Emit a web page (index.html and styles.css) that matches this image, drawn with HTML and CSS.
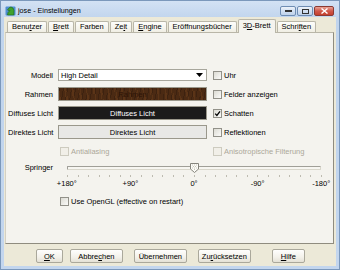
FILE: index.html
```html
<!DOCTYPE html>
<html lang="de">
<head>
  <meta charset="UTF-8" />
  <title>jose - Einstellungen</title>
  <link rel="stylesheet" href="styles.css">
</head>
<body>
  <div class="window">
    <div class="titlebar">
      <svg class="app-icon" width="11" height="10" viewBox="0 0 11 10">
        <rect x="0.5" y="0.5" width="10" height="9" rx="1" fill="#4f8fd0"/>
        <path d="M2.5 9 L3 6.5 L5 4.5 L3.5 4.8 L2.5 3.8 L4.5 1.5 L6 1 L8 2 L9 4.5 L8.8 9 Z" fill="#3fa22c" stroke="#1d6414" stroke-width="0.6"/>
      </svg>
      <span class="title">jose - Einstellungen</span>
      <div class="caption-buttons">
        <span class="cap min"><svg width="7" height="3"><rect x="0" y="0" width="7" height="2" fill="#333" /></svg></span>
        <span class="cap max"><svg width="7" height="5"><rect x="0.5" y="0.5" width="6" height="4" fill="none" stroke="#333"/></svg></span>
        <span class="cap close"><svg width="7" height="6"><path d="M0.5 0.5 L6.5 5.5 M6.5 0.5 L0.5 5.5" stroke="#fff" stroke-width="1.4"/></svg></span>
      </div>
    </div>

    <div class="client">
      <div class="tabs">
        <span class="tab">Benu<u>t</u>zer</span>
        <span class="tab"><u>B</u>rett</span>
        <span class="tab">Farben</span>
        <span class="tab">Ze<u>i</u>t</span>
        <span class="tab"><u>E</u>ngine</span>
        <span class="tab">Eröffnungsbücher</span>
        <span class="tab active">3<u>D</u>-Brett</span>
        <span class="tab">Schri<u>f</u>ten</span>
      </div>

      <div class="panel">
        <div class="form">
          <span class="label">Modell</span>
          <div class="select">
            <span>High Detail</span>
            <svg width="7" height="4"><path d="M0 0 L7 0 L3.5 4 Z" fill="#000"/></svg>
          </div>
          <label class="check"><span class="box"></span>Uhr</label>

          <span class="label">Rahmen</span>
          <div class="color-btn wood">Rahmen</div>
          <label class="check"><span class="box"></span>Felder anzeigen</label>

          <span class="label">Diffuses Licht</span>
          <div class="color-btn dark">Diffuses Licht</div>
          <label class="check"><span class="box"><svg width="7" height="7"><path d="M1.2 3.6 L2.9 5.4 L6 1.4" fill="none" stroke="#000" stroke-width="1.3"/></svg></span>Schatten</label>

          <span class="label">Direktes Licht</span>
          <div class="color-btn light">Direktes Licht</div>
          <label class="check"><span class="box"></span>Reflektionen</label>

          <span></span>
          <label class="check off indent"><span class="box"></span>Antialiasing</label>
          <label class="check off"><span class="box"></span>Anisotropische Filterung</label>
        </div>

        <div class="slider-row">
          <span class="label">Springer</span>
          <div class="slider">
            <div class="rail">
              <div class="track"></div>
              <svg class="thumb" width="9" height="10" viewBox="0 0 9 10">
                <path d="M0.5 0.5 H8.5 V6 L4.5 9.5 L0.5 6 Z" fill="#fbfbf7" stroke="#85847c"/>
                <path d="M2 2 h1 M4 2 h1 M6 2 h1 M3 3.5 h1 M5 3.5 h1 M2 5 h1 M4 5 h1 M6 5 h1 M4 6.5 h1" stroke="#c9c7bb" stroke-width="1"/>
              </svg>
            </div>
            <div class="ticks"></div>
            <div class="scale">
              <span>+180°</span>
              <span>+90°</span>
              <span>0°</span>
              <span>-90°</span>
              <span>-180°</span>
            </div>
          </div>
        </div>

        <label class="check opengl"><span class="box"></span>Use OpenGL (effective on restart)</label>
      </div>

      <div class="buttons">
        <button class="btn"><u>O</u>K</button>
        <button class="btn wide">Abbre<u>c</u>hen</button>
        <button class="btn wide sep">Übernehmen</button>
        <button class="btn wide sep">Zu<u>r</u>ücksetzen</button>
        <button class="btn help"><u>H</u>ilfe</button>
      </div>
    </div>
  </div>
</body>
</html>
```

FILE: styles.css
```css
body {
  margin: 0;
  font-family: "Liberation Sans", Arial, sans-serif;
  font-size: 7.5px;
  color: #000;
}
u {
  text-underline-offset: 1px;
}
.window {
  width: 340px;
  height: 270px;
  box-sizing: border-box;
  display: flex;
  flex-direction: column;
  padding: 0 3px 3px;
  border: 1px solid #7b98bb;
  background: linear-gradient(#d3e2f4, #c0d4ed 18px, #c3d6ee);
}
.titlebar {
  height: 16px;
  box-sizing: border-box;
  display: flex;
  align-items: flex-end;
  padding: 0 2px 1px 1px;
}
.app-icon {
  margin-right: 2px;
}
.title {
  flex: 1;
  line-height: 10px;
  font-size: 7.2px;
}
.caption-buttons {
  display: flex;
  gap: 1px;
}
.cap {
  height: 10px;
  box-sizing: border-box;
  display: flex;
  align-items: center;
  justify-content: center;
  border: 1px solid #6f8db3;
  border-radius: 2px;
  background: linear-gradient(#eef3fa, #d2e0f1 50%, #bfd2ea);
}
.cap.min, .cap.max {
  width: 16px;
}
.cap.close {
  width: 20px;
  border-color: #8a3a33;
  background: linear-gradient(#e9a395, #d0584a 50%, #c4402f);
}
.client {
  flex: 1;
  display: flex;
  flex-direction: column;
  background: #ece9d8;
}
.tabs {
  height: 15px;
  display: flex;
  align-items: flex-end;
  gap: 1px;
  padding-left: 3px;
}
.tab {
  height: 11px;
  box-sizing: border-box;
  padding: 0 4px;
  line-height: 10px;
  border: 1px solid #b9b6a8;
  border-bottom: none;
  border-radius: 2px 2px 0 0;
  background: linear-gradient(#fdfdfb, #f0eee4);
}
.tab.active {
  position: relative;
  z-index: 1;
  height: 14px;
  margin-bottom: -1px;
  line-height: 11px;
  background: #f4f3ee;
}
.panel {
  height: 212px;
  box-sizing: border-box;
  margin: 0 2px 0 1px;
  padding: 35px 0 0 2px;
  border: 1px solid;
  border-color: #b9b6a8 #8f8c7f #8f8c7f #d3d0c4;
  background: #f4f3ee;
}
.form {
  display: grid;
  grid-template-columns: 45px 149px auto;
  grid-auto-rows: 14px;
  column-gap: 5px;
  row-gap: 5px;
  align-items: center;
}
.label {
  text-align: right;
  white-space: nowrap;
}
.select {
  height: 12px;
  box-sizing: border-box;
  display: flex;
  align-items: center;
  justify-content: space-between;
  padding: 0 3px 0 2px;
  border: 1px solid #a7a69c;
  background: #fff;
}
.color-btn {
  height: 14px;
  box-sizing: border-box;
  display: flex;
  align-items: center;
  justify-content: center;
  border: 1px solid #9a988c;
}
.wood {
  color: #2e1507;
  background:
    repeating-linear-gradient(100deg, rgba(0,0,0,0.18) 0 1px, transparent 1px 4px),
    repeating-linear-gradient(80deg, rgba(120,70,30,0.35) 0 2px, transparent 2px 7px),
    #4b2a13;
}
.dark {
  color: #fff;
  background: #1b1b1b;
}
.light {
  background: #e8e8e6;
}
.check {
  display: flex;
  align-items: center;
  gap: 2px;
  margin-left: 1px;
  white-space: nowrap;
}
.box {
  width: 9px;
  height: 9px;
  box-sizing: border-box;
  display: flex;
  align-items: center;
  justify-content: center;
  border: 1px solid #929189;
  background: linear-gradient(135deg, #dcdbd3, #fbfbf9);
}
.check.indent {
  margin-left: 2px;
}
.check.off {
  color: #aca899;
}
.check.off .box {
  border-color: #cdcbbf;
  background: #f1efe8;
}
.slider-row {
  display: flex;
  margin-top: 5px;
}
.slider-row .label {
  width: 45px;
  line-height: 10px;
}
.slider {
  width: 254px;
  margin-left: 14px;
}
.rail {
  position: relative;
  height: 10px;
}
.track {
  height: 4px;
  box-sizing: border-box;
  position: relative;
  top: 3px;
  border: 1px solid;
  border-color: #a09f98 #d9d7cc #d9d7cc #a09f98;
  border-radius: 1px;
  background: #f7f6f1;
}
.thumb {
  position: absolute;
  left: 50%;
  top: 0;
  margin-left: -4px;
}
.ticks {
  width: 255px;
  height: 2px;
  margin-top: 2px;
  background: repeating-linear-gradient(to right, #bdbbb0 0 1px, transparent 1px 10.5833px);
}
.scale {
  display: grid;
  grid-template-columns: repeat(5, 1fr);
  margin: 2px -32px 0;
  line-height: 9px;
  text-align: center;
}
.check.opengl {
  margin: 9px 0 0 52px;
}
.buttons {
  display: flex;
  padding: 5px 0 0 32px;
}
.btn {
  height: 14px;
  box-sizing: border-box;
  padding: 0 7px;
  font: inherit;
  color: #000;
  border: 1px solid #aaa89b;
  border-radius: 2px;
  background: linear-gradient(#fefefd, #f3f1ea 60%, #e4e1d5);
}
.btn + .btn {
  margin-left: 7px;
}
.btn.wide {
  width: 53px;
  padding: 0;
}
.btn.sep {
  margin-left: 11px;
}
.btn.help {
  margin-left: 21px;
  width: 33px;
  padding: 0;
}
```
